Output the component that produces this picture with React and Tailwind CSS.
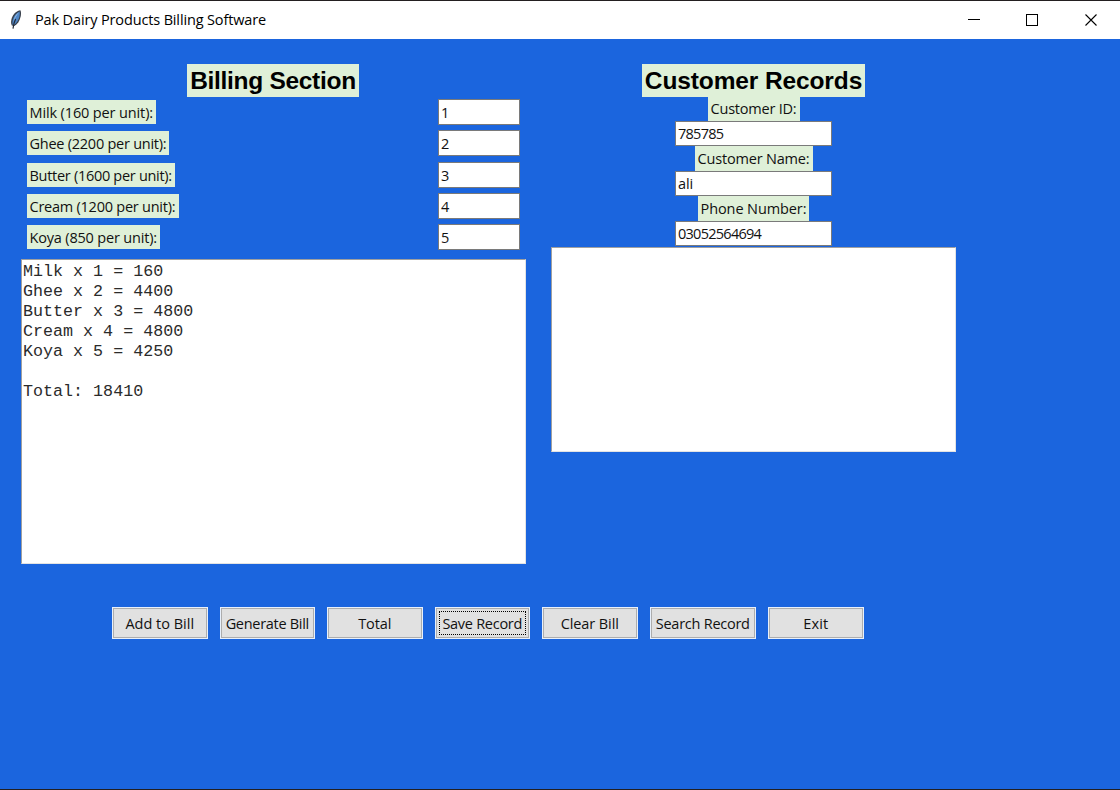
import React from "react";

const products = [
  { label: "Milk (160 per unit):", qty: "1", width: "w-[129px]", tracking: "tracking-[-0.13px]" },
  { label: "Ghee (2200 per unit):", qty: "2", width: "w-[142px]", tracking: "tracking-[-0.25px]" },
  { label: "Butter (1600 per unit):", qty: "3", width: "w-[148px]", tracking: "tracking-[-0.29px]" },
  { label: "Cream (1200 per unit):", qty: "4", width: "w-[152px]", tracking: "tracking-[-0.24px]" },
  { label: "Koya (850 per unit):", qty: "5", width: "w-[133px]", tracking: "tracking-[-0.18px]" },
];

const customer = [
  { label: "Customer ID:", value: "785785", width: "w-[92px]", tracking: "tracking-[-0.22px]" },
  { label: "Customer Name:", value: "ali", width: "w-[118px]", tracking: "tracking-[-0.18px]" },
  { label: "Phone Number:", value: "03052564694", width: "w-[111px]", tracking: "tracking-[-0.1px]" },
];

const buttons = [
  { label: "Add to Bill", width: "w-[95.5px]", tracking: "tracking-normal" },
  { label: "Generate Bill", width: "w-[95.5px]", tracking: "tracking-[-0.3px]" },
  { label: "Total", width: "w-[95.5px]", tracking: "tracking-[-0.1px]" },
  { label: "Save Record", width: "w-[95.5px]", tracking: "tracking-[-0.28px]", focused: true },
  { label: "Clear Bill", width: "w-[95.5px]", tracking: "tracking-[-0.1px]" },
  { label: "Search Record", width: "w-[106.5px]", tracking: "tracking-[-0.25px]" },
  { label: "Exit", width: "w-[95.5px]", tracking: "tracking-[0.1px]" },
];

const bill = `Milk x 1 = 160
Ghee x 2 = 4400
Butter x 3 = 4800
Cream x 4 = 4800
Koya x 5 = 4250

Total: 18410`;

function Feather() {
  return (
    <svg width="14" height="20" viewBox="0 0 14 20" className="shrink-0">
      <path d="M11.4 0.2C8 0.6 4.6 3.4 3 7.4C1.9 10.2 1.7 13 2.8 15.6L5.4 16C8.6 14.2 10.8 10.8 11.6 6.8C12 4.6 12.4 2.2 11.4 0.2Z" fill="#39404c" />
      <path d="M10.6 1.6C7.8 2.8 5.4 5.4 4.2 8.8C3.4 11 3.2 13 3.6 14.8L4.8 15C7.6 13.4 9.6 10.2 10.4 6.8C10.8 5 11 3.2 10.6 1.6Z" fill="#4f86c6" />
      <path d="M9.8 2.6C7.6 4 5.8 6.4 5 9.4L4.6 11.6C6 8 7.8 5 9.8 2.6Z" fill="#9cc0e8" />
      <path d="M6.6 9C5.2 12 4.4 15 4 18.6" fill="none" stroke="#232a36" strokeWidth="1.2" />
    </svg>
  );
}

function TitleBar() {
  return (
    <header className="flex h-[39px] shrink-0 items-center border-t border-[#231f20] bg-white">
      <div className="ml-[9px] flex">
        <Feather />
      </div>
      <h1 className="ml-3 grow whitespace-nowrap text-[14.5px] leading-5 tracking-[-0.14px] text-black">Pak Dairy Products Billing Software</h1>
      <svg width="152" height="38" viewBox="0 0 152 38" fill="none" stroke="#000" shapeRendering="crispEdges">
        <path d="M0 18.5H12" />
        <rect x="58.5" y="13.5" width="11" height="11" />
        <path d="M117.5 13.5L128.5 24.5M128.5 13.5L117.5 24.5" shapeRendering="auto" strokeWidth="1.1" />
      </svg>
    </header>
  );
}

function Heading({ children, width, tracking }) {
  return (
    <h2 className={`${width} ${tracking} h-[33px] whitespace-nowrap bg-[#dff0d8] text-center font-["Liberation_Sans",sans-serif] text-[24.5px] font-bold leading-[33px] text-black`}>
      {children}
    </h2>
  );
}

function Entry({ value, size }) {
  return (
    <div className={`${size} border border-[#7a7a7a] bg-white pl-[2px] ${value.length > 3 ? "tracking-[-0.73px]" : "tracking-[-0.1px]"}`}>
      {value}
    </div>
  );
}

export default function App() {
  return (
    <div className='flex h-[790px] w-[1120px] flex-col overflow-hidden border-b border-[#231f20] bg-[#1b65de] font-["Open_Sans",sans-serif] text-[14.5px] text-[#111]'>
      <TitleBar />
      <main className="flex grow flex-col">
        <div className="flex items-start pl-[21px] pt-[25px]">
          <section className="flex w-[505px] flex-col">
            <div className="ml-[166px]">
              <Heading width="w-[172px]" tracking="tracking-[-0.3px]">Billing Section</Heading>
            </div>
            <div className="mt-[2.2px] flex flex-col gap-[5.2px]">
              {products.map((p) => (
                <div key={p.label} className="flex h-[26px] items-center justify-between pl-[6px] pr-[6px]">
                  <div className={`${p.width} ${p.tracking} h-6 whitespace-nowrap bg-[#dff0d8] pl-[2.5px] leading-[25px]`}>{p.label}</div>
                  <Entry value={p.qty} size="w-[82px] h-[26px] leading-[25px]" />
                </div>
              ))}
            </div>
            <pre className='mt-[9.2px] h-[305px] border border-[#a0a0a0] border-b-[#e3e3e3] border-r-[#e3e3e3] bg-white pl-[1px] pt-[2px] font-["Liberation_Mono",monospace] text-[16.67px] leading-[20px] tracking-[0.02px] text-[#2b2b2b]'>
              {bill}
            </pre>
          </section>
          <section className="ml-[25px] flex w-[405px] flex-col items-center">
            <Heading width="w-[223px]" tracking="tracking-[-0.12px]">Customer Records</Heading>
            <div className="-mt-px flex flex-col">
              {customer.map((c) => (
                <div key={c.label} className="flex h-[50px] flex-col items-center">
                  <div className={`${c.width} ${c.tracking} h-[25px] whitespace-nowrap bg-[#dff0d8] text-center leading-[26px]`}>{c.label}</div>
                  <Entry value={c.value} size="w-[157px] h-[25px] leading-[23px]" />
                </div>
              ))}
            </div>
            <div className="mt-px h-[205px] w-full border border-[#a0a0a0] border-b-[#e3e3e3] border-r-[#e3e3e3] bg-white" />
          </section>
        </div>
        <div className="ml-[112px] mt-[43px] flex gap-[12px]">
          {buttons.map((b) => (
            <button key={b.label} className={`${b.width} ${b.tracking} h-8 shrink-0 border border-[#e8f0fb] bg-[#e1e1e1]`}>
              <span className="flex h-full items-center justify-center border border-[#adadad] p-[2px]">
                <span className={`flex h-full w-full items-center justify-center whitespace-nowrap ${b.focused ? "border border-dotted border-black" : ""}`}>
                  <span className="pt-px">{b.label}</span>
                </span>
              </span>
            </button>
          ))}
        </div>
      </main>
    </div>
  );
}
